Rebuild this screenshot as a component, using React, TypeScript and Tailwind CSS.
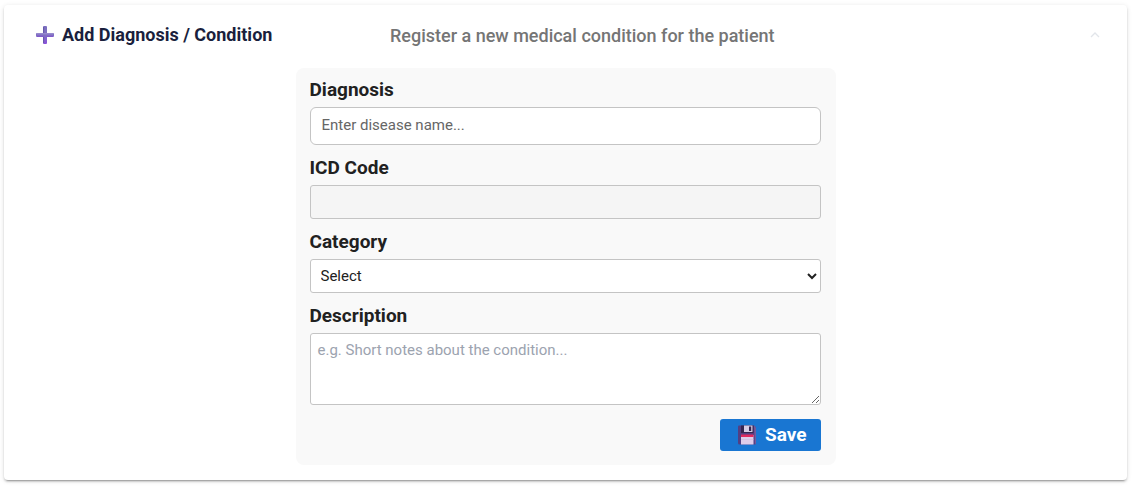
import { useState } from "react";
import type { ReactNode } from "react";

function PlusIcon() {
  return (
    <svg viewBox="0 0 18 18" className="size-[18px] shrink-0" aria-hidden="true">
      <defs>
        <linearGradient id="plus-fill" x1="0" y1="0" x2="0" y2="1">
          <stop offset="0" stopColor="#7b6fc0" />
          <stop offset="0.5" stopColor="#8070c2" />
          <stop offset="1" stopColor="#8a50dc" />
        </linearGradient>
      </defs>
      <path
        d="M8 0h2q1 0 1 1v6h6q1 0 1 1v2q0 1-1 1h-6v6q0 1-1 1H8q-1 0-1-1v-6H1q-1 0-1-1V8q0-1 1-1h6V1q0-1 1-1z"
        fill="url(#plus-fill)"
      />
      <path d="M1 10.3h6.3M11 10.3h6" stroke="#8055cc" strokeWidth="1" />
      <path d="M7.6 1v6.4M7.6 11v6" stroke="#6558a8" strokeWidth="1" />
      <path d="M1 7.8h16" stroke="#a195d2" strokeWidth="1" />
    </svg>
  );
}

function FloppyIcon() {
  return (
    <svg viewBox="0 0 20 20" className="size-5 shrink-0" aria-hidden="true">
      <path d="M2 .5h15L19 2.5V18q0 1.5-1.5 1.5h-15Q1 19.500 1 18V1.500Q1 .5 2 .5z" fill="#533f83" />
      <path d="M17 .5 19 2.5V18q0 1-1 1.400z" fill="#75599a" />
      <path d="M4 .5h12.500V8H4z" fill="#35254f" />
      <path d="M7 .5h8.500V7H7z" fill="#d5cce5" />
      <path d="M12 1.500h2.200V6H12z" fill="#35254f" />
      <path d="M4 10h12.500v9.500H4z" fill="#dfcdea" />
      <path d="M4 9.500h12.500v2.500H4z" fill="#e2295f" />
      <path d="M4 14.500h12.500" stroke="#cdb8dd" strokeWidth=".6" />
    </svg>
  );
}

function Field({ id, label, children }: { id: string; label: string; children: ReactNode }) {
  return (
    <div className="flex flex-col gap-1.5">
      <label htmlFor={id} className="text-[19px] leading-[22px] font-bold text-[#212121]">
        {label}
      </label>
      {children}
    </div>
  );
}

const control =
  "w-full border border-[#c4c4c4] text-[15px] text-[#212121] outline-none focus:border-[#1976d2]";

export default function App() {
  const [open, setOpen] = useState(true);

  return (
    <main className="pt-[5px] pr-[10px] pb-2 pl-1 font-['Roboto',sans-serif]">
      <section className="rounded bg-white pb-[15px] shadow-[0_3px_1px_-2px_rgba(0,0,0,0.2),0_2px_2px_0_rgba(0,0,0,0.14),0_1px_5px_0_rgba(0,0,0,0.12)]">
        <button
          type="button"
          aria-expanded={open}
          aria-controls="diagnosis-form"
          onClick={() => setOpen(!open)}
          className="flex h-[63px] w-full items-center pr-[27px] pb-1 pl-8 text-left"
        >
          <span className="mr-4 flex flex-1 items-center gap-2 text-lg font-bold whitespace-nowrap text-[#1a1f3d]">
            <PlusIcon />
            Add Diagnosis / Condition
          </span>
          <span className="mr-6 flex-2 pt-0.5 text-lg font-medium text-[#757575]">
            Register a new medical condition for the patient
          </span>
          <svg
            viewBox="0 0 10 10"
            className={open ? "size-[10px]" : "size-[10px] rotate-180"}
            fill="none"
            stroke="#e2e5ea"
            strokeWidth="1.300"
            aria-hidden="true"
          >
            <path d="M1 7 5 3l4 4" />
          </svg>
        </button>

        {open && (
          <form
            id="diagnosis-form"
            onSubmit={(e) => e.preventDefault()}
            className="mx-auto flex max-w-[540px] flex-col gap-3 rounded-lg bg-[#f9f9f9] pt-[11px] pr-[15px] pb-[14px] pl-[14px]"
          >
            <Field id="diagnosis" label="Diagnosis">
              <input
                id="diagnosis"
                type="text"
                placeholder="Enter disease name..."
                className={`${control} h-[38px] rounded-md bg-white px-[11px] pb-0.5 placeholder:text-[#666666]`}
              />
            </Field>
            <Field id="icd-code" label="ICD Code">
              <input
                id="icd-code"
                type="text"
                readOnly
                className={`${control} h-[34px] rounded-[3px] bg-[#f5f5f5] px-[11px]`}
              />
            </Field>
            <Field id="category" label="Category">
              <select id="category" className={`${control} h-[34px] rounded-[3px] bg-white px-1.5`}>
                <option>Select</option>
              </select>
            </Field>
            <Field id="description" label="Description">
              <textarea
                id="description"
                placeholder="e.g. Short notes about the condition..."
                className={`${control} h-[72px] resize-y rounded-[3px] bg-white px-[7px] py-[5px] placeholder:text-[#9ca3af]`}
              />
            </Field>
            <button
              type="submit"
              className="mt-0.5 flex h-8 items-center gap-2 self-end rounded-[3px] bg-[#1976d2] pr-[14px] pl-[17px] text-[19px] font-bold text-white hover:bg-[#1565c0]"
            >
              <FloppyIcon />
              Save
            </button>
          </form>
        )}
      </section>
    </main>
  );
}
